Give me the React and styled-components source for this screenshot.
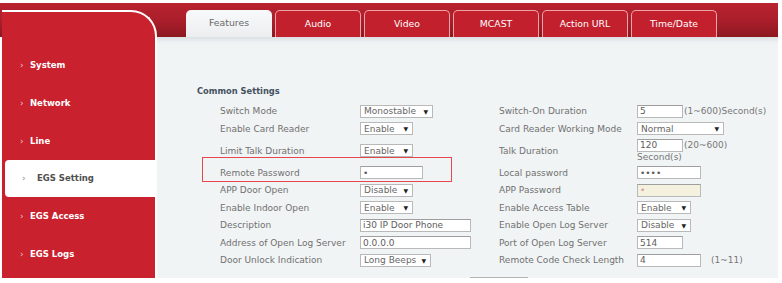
import React from 'react';
import styled, { createGlobalStyle } from 'styled-components';

const GlobalStyle = createGlobalStyle`
    html, body {
        margin: 0;
        padding: 0;
        background: #ffffff;
        overflow: hidden;
    }
    body {
        font-family: "DejaVu Sans", Verdana, sans-serif;
    }
`;

const Frame = styled.div`
    display: flex;
    height: 275px;
    margin: 3px 4px 0 0;
    background: linear-gradient(to bottom, #b9232f 0%, #a81e2a 55%, #8c1820 100%) no-repeat;
    background-size: 100% 34px;
`;

const Sidebar = styled.nav`
    width: 155px;
    flex-shrink: 0;
    margin: 7px 0 0 2px;
    padding-top: 33.5px;
    box-sizing: border-box;
    background: #c9212e;
    border-top: 2px solid #ffffff;
    border-right: 2px solid #ffffff;
    border-top-right-radius: 26px;
    display: flex;
    flex-direction: column;
`;

const NavItem = styled.div`
    height: 37px;
    display: flex;
    align-items: center;
    margin-left: ${p => (p.$active ? '3px' : '0')};
    margin-right: ${p => (p.$active ? '-2px' : '0')};
    padding-left: ${p => (p.$active ? '17px' : '18px')};
    padding-top: ${p => (p.$active ? '0' : '1px')};
    background: ${p => (p.$active ? '#ffffff' : 'transparent')};
    border-radius: 4px 0 0 4px;
    color: ${p => (p.$active ? '#4f4f4f' : '#ffffff')};
    font-size: 8.5px;
    font-weight: bold;
`;

const Chevron = styled.span`
    font-size: 9px;
    font-weight: normal;
    width: ${p => (p.$active ? '15px' : '10px')};
    color: ${p => (p.$active ? '#8a8a8a' : '#f3c7ca')};
`;

const Main = styled.div`
    flex: 1;
    min-width: 0;
    display: flex;
    flex-direction: column;
`;

const TabBar = styled.div`
    height: 34px;
    flex-shrink: 0;
    display: flex;
    align-items: flex-end;
    gap: 3px;
    padding-left: 29px;
    box-sizing: border-box;
`;

const Tab = styled.div`
    width: 86px;
    height: 27px;
    box-sizing: border-box;
    display: flex;
    align-items: center;
    justify-content: center;
    padding-bottom: 2px;
    border-radius: 5px 5px 0 0;
    font-size: 9.3px;
    color: ${p => (p.$active ? '#6a6a6a' : '#ffffff')};
    background: ${p => (p.$active ? 'linear-gradient(#f8f9fa, #eceef0)' : '#c3202d')};
    border: ${p => (p.$active ? 'none' : '1px solid #eea3a8')};
    border-bottom: none;
`;

const Panel = styled.div`
    flex: 1;
    min-height: 0;
    position: relative;
    background: linear-gradient(to bottom, #dcdfe2 0px, #eef1f3 5px, #f1f4f5 8px);
    padding: 48px 0 0 40px;
    box-sizing: border-box;
`;

const Heading = styled.div`
    font-size: 8.3px;
    font-weight: bold;
    color: #44525f;
    line-height: 12px;
    margin-bottom: 5.25px;
`;

const Form = styled.div`
    margin-left: 23px;
    display: flex;
    flex-direction: column;
`;

const Row = styled.div`
    display: grid;
    grid-template-columns: 140px 139px 138px 1fr;
    align-items: center;
    height: ${p => (p.$tall ? '26.5px' : '17.5px')};
    font-size: 9px;
    color: #707070;
`;

const Label = styled.span`
    white-space: nowrap;
`;

const Cell = styled.div`
    display: flex;
    align-items: center;
    white-space: nowrap;
`;

const Stack = styled.div`
    display: flex;
    flex-direction: column;
    line-height: 11px;
`;

const SelectBox = styled.div`
    width: ${p => p.$w}px;
    height: 13px;
    box-sizing: border-box;
    display: flex;
    align-items: center;
    justify-content: space-between;
    padding: 0 4px 0 3px;
    background: #ffffff;
    border: 1px solid #b9b9b9;
    font-size: 9px;
    color: #666666;
`;

const Arrow = styled.span`
    font-size: 6px;
    color: #222222;
`;

const Field = styled.input`
    width: ${p => p.$w}px;
    height: 13px;
    box-sizing: border-box;
    margin: 0;
    padding: 0 2px;
    border: 1px solid #b9b9b9;
    border-top-color: #9e9e9e;
    border-radius: 0;
    background: ${p => (p.disabled ? '#f4f1df' : '#ffffff')};
    font-family: "DejaVu Sans", Verdana, sans-serif;
    font-size: 9px;
    color: ${p => (p.disabled ? '#d8a0a0' : '#5d5d5d')};
    outline: none;
`;

const Hint = styled.span`
    font-size: 9px;
    color: #777777;
    margin-left: ${p => p.$gap ?? 1}px;
`;

const Highlight = styled.div`
    position: absolute;
    left: 45px;
    top: 120px;
    width: 250px;
    height: 25px;
    box-sizing: border-box;
    border: 1px solid #e4474d;
    pointer-events: none;
`;

const Footer = styled.div`
    padding-left: 273px;
    margin-top: 2.25px;
`;

const ApplyButton = styled.button`
    width: 58px;
    height: 16px;
    padding: 0 0 3px;
    border: 1px solid #b4b4b4;
    border-radius: 0;
    background: linear-gradient(#fbfbfb, #e9e9e9);
    font-family: "DejaVu Sans", Verdana, sans-serif;
    font-size: 9px;
    color: #808080;
`;

const Select = ({ w, children }) => (
    <SelectBox $w={w}>
        <span>{children}</span>
        <Arrow>▼</Arrow>
    </SelectBox>
);

const navItems = ['System', 'Network', 'Line', 'EGS Setting', 'EGS Access', 'EGS Logs'];
const tabs = ['Features', 'Audio', 'Video', 'MCAST', 'Action URL', 'Time/Date'];

export default function App() {
    return (
        <>
            <GlobalStyle />
            <Frame>
                <Sidebar>
                    {navItems.map(name => {
                        const active = name === 'EGS Setting';
                        return (
                            <NavItem key={name} $active={active}>
                                <Chevron $active={active}>›</Chevron>
                                {name}
                            </NavItem>
                        );
                    })}
                </Sidebar>
                <Main>
                    <TabBar>
                        {tabs.map(t => (
                            <Tab key={t} $active={t === 'Features'}>{t}</Tab>
                        ))}
                    </TabBar>
                    <Panel>
                        <Heading>Common Settings</Heading>
                        <Form>
                            <Row>
                                <Label>Switch Mode</Label>
                                <Cell><Select w={73}>Monostable</Select></Cell>
                                <Label>Switch-On Duration</Label>
                                <Cell>
                                    <Field $w={46} readOnly value="5" />
                                    <Hint>(1~600)Second(s)</Hint>
                                </Cell>
                            </Row>
                            <Row>
                                <Label>Enable Card Reader</Label>
                                <Cell><Select w={53}>Enable</Select></Cell>
                                <Label>Card Reader Working Mode</Label>
                                <Cell><Select w={87}>Normal</Select></Cell>
                            </Row>
                            <Row $tall>
                                <Label>Limit Talk Duration</Label>
                                <Cell><Select w={53}>Enable</Select></Cell>
                                <Label>Talk Duration</Label>
                                <Stack>
                                    <Cell>
                                        <Field $w={46} readOnly value="120" />
                                        <Hint>(20~600)</Hint>
                                    </Cell>
                                    <Hint $gap={0}>Second(s)</Hint>
                                </Stack>
                            </Row>
                            <Row>
                                <Label>Remote Password</Label>
                                <Cell><Field $w={63} type="password" readOnly value="*" /></Cell>
                                <Label>Local password</Label>
                                <Cell><Field $w={64} type="password" readOnly value="****" /></Cell>
                            </Row>
                            <Row>
                                <Label>APP Door Open</Label>
                                <Cell><Select w={53}>Disable</Select></Cell>
                                <Label>APP Password</Label>
                                <Cell><Field $w={64} type="password" disabled value="*" /></Cell>
                            </Row>
                            <Row>
                                <Label>Enable Indoor Open</Label>
                                <Cell><Select w={53}>Enable</Select></Cell>
                                <Label>Enable Access Table</Label>
                                <Cell><Select w={54}>Enable</Select></Cell>
                            </Row>
                            <Row>
                                <Label>Description</Label>
                                <Cell><Field $w={111} readOnly value="i30 IP Door Phone" /></Cell>
                                <Label>Enable Open Log Server</Label>
                                <Cell><Select w={54}>Disable</Select></Cell>
                            </Row>
                            <Row>
                                <Label>Address of Open Log Server</Label>
                                <Cell><Field $w={111} readOnly value="0.0.0.0" /></Cell>
                                <Label>Port of Open Log Server</Label>
                                <Cell><Field $w={46} readOnly value="514" /></Cell>
                            </Row>
                            <Row>
                                <Label>Door Unlock Indication</Label>
                                <Cell><Select w={71}>Long Beeps</Select></Cell>
                                <Label>Remote Code Check Length</Label>
                                <Cell>
                                    <Field $w={64} readOnly value="4" />
                                    <Hint $gap={10}>(1~11)</Hint>
                                </Cell>
                            </Row>
                        </Form>
                        <Footer>
                            <ApplyButton>Apply</ApplyButton>
                        </Footer>
                        <Highlight />
                    </Panel>
                </Main>
            </Frame>
        </>
    );
}
